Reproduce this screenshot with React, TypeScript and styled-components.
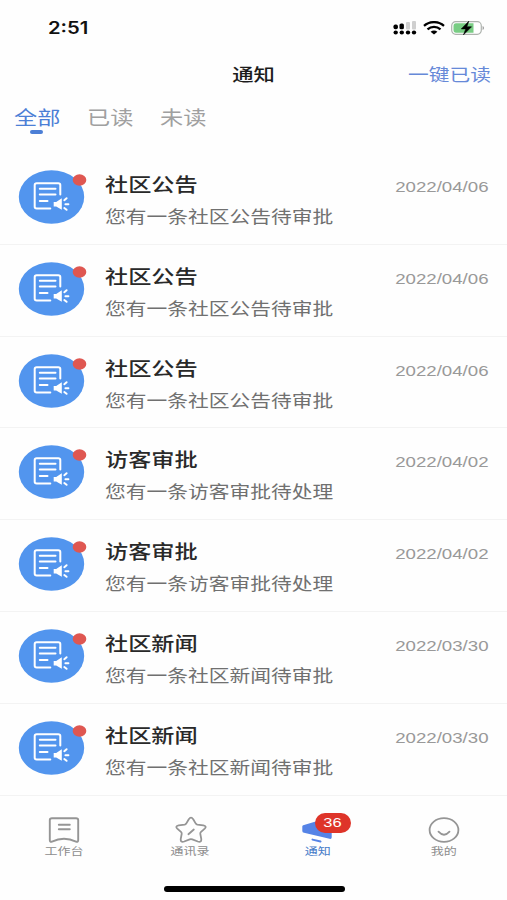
import React from 'react';
import styled, { createGlobalStyle } from 'styled-components';

const Global = createGlobalStyle`
  * { box-sizing: border-box; }
  body { margin: 0; background: #fefefe; overflow: hidden; }
`;

const Screen = styled.div`
  width: 507px;
  height: 900px;
  display: flex;
  flex-direction: column;
  background: #fefefe;
  font-family: Inter, "Noto Sans CJK SC", sans-serif;
`;

const Label = styled.span<{ $size: number; $color: string; $weight?: number; $stretch?: number; $origin?: string }>`
  display: block;
  flex: none;
  white-space: nowrap;
  font-size: ${p => p.$size}px;
  line-height: 24px;
  color: ${p => p.$color};
  font-weight: ${p => p.$weight ?? 400};
  transform: scaleX(${p => p.$stretch ?? 1.22});
  transform-origin: ${p => p.$origin ?? 'left'} center;
`;

const DateLabel = styled(Label)`
  font-family: "Liberation Sans", sans-serif;
`;

const StatusBar = styled.header`
  height: 55px;
  padding: 0 22px 0 48px;
  display: flex;
  align-items: center;
  justify-content: space-between;
`;

const StatusIcons = styled.div`
  display: flex;
  align-items: center;
  gap: 6px;
  svg { display: block; }
`;

const TitleBar = styled.div`
  height: 40px;
  padding: 0 16px;
  display: grid;
  grid-template-columns: 1fr auto 1fr;
  align-items: center;
`;

const ActionSlot = styled.div`
  display: flex;
  justify-content: flex-end;
`;

const Tabs = styled.nav`
  height: 58px;
  padding: 12px 0 0 14px;
  display: flex;
`;

const Tab = styled.div`
  width: 73px;
  flex: none;
`;

const Marker = styled.div`
  width: 13px;
  height: 4px;
  margin: -1px 0 0 16px;
  border-radius: 2px;
  background: #4c7fd6;
`;

const List = styled.main`
  height: 642.6px;
  display: grid;
  grid-template-rows: repeat(7, 91.8px);
`;

const Row = styled.article`
  display: flex;
  padding: 0 18px 0 18px;
  border-bottom: 1px solid #f3f3f3;
`;

const Avatar = styled.div`
  width: 87px;
  padding-top: 16px;
  flex: none;
  svg { display: block; }
`;

const Message = styled.div`
  flex: 1;
  padding-top: 21px;
  display: flex;
  flex-direction: column;
  gap: 7px;
`;

const DateSlot = styled.div`
  padding-top: 22px;
`;

const BottomBar = styled.footer`
  height: 84px;
  padding-top: 19px;
  display: grid;
  grid-template-columns: repeat(4, 126.7px);
`;

const NavItem = styled.div`
  position: relative;
  left: 0.5px;
  display: flex;
  flex-direction: column;
  align-items: center;
  svg { display: block; flex: none; }
  > span { line-height: 14px; }
`;

const Badge = styled.div`
  position: absolute;
  left: 61px;
  top: -2px;
  width: 36px;
  height: 20px;
  border-radius: 10px;
  background: #de3429;
  display: flex;
  align-items: center;
  justify-content: center;
`;

const HomeIndicator = styled.div`
  width: 181px;
  height: 6px;
  margin: 6px 0 0 163.5px;
  border-radius: 3px;
  background: #000;
`;

const SignalIcon = () => (
  <svg width="24" height="14" viewBox="0 0 24 14">
    <g fill="#cfcfcf">
      <rect x="13" y="1" width="4" height="7.5" rx="1" />
      <rect x="19" y="0" width="4" height="8.5" rx="1" />
    </g>
    <g fill="#000">
      <rect x="0.5" y="3.5" width="4.4" height="4.8" rx="1.8" />
      <rect x="6.5" y="2.5" width="4.4" height="5.8" rx="1.6" />
      <ellipse cx="2.7" cy="11.5" rx="2.2" ry="2" />
      <ellipse cx="8.8" cy="11.5" rx="2.2" ry="2" />
      <ellipse cx="15" cy="11.5" rx="2.2" ry="2" />
      <ellipse cx="21" cy="11.5" rx="2.2" ry="2" />
    </g>
  </svg>
);

const WifiIcon = () => (
  <svg width="22" height="14" viewBox="0 0 22 14" fill="none" stroke="#000" strokeWidth="2.3">
    <path d="M1 4.8C6.7-.1 15.3-.1 21 4.8" />
    <path d="M4.5 8.3C8.2 5.1 13.8 5.1 17.5 8.3" />
    <path d="M7.6 10.8C9.6 9.2 12.4 9.2 14.4 10.8L11 13.6Z" fill="#000" stroke="none" />
  </svg>
);

const BatteryIcon = () => (
  <svg width="34" height="16" viewBox="0 0 34 16">
    <rect x=".7" y="1.7" width="29.6" height="12.6" rx="4" fill="#fff" stroke="#aeb3ae" strokeWidth="1.2" />
    <path d="M5 3.3H22.5V12.7H5Q2.5 12.7 2.5 10V6Q2.5 3.3 5 3.3Z" fill="#79cd84" />
    <path d="M31.6 6Q33 6.5 33 8T31.6 10Z" fill="#999" />
    <path d="M17.8 1.2L10.3 8.9H14.8L12.5 14.8L20.5 6.8H15.8Z" fill="#000" stroke="#000" strokeWidth=".6" strokeLinejoin="round" />
  </svg>
);

const NoticeIcon = () => (
  <svg width="70" height="56" viewBox="0 0 70 56">
    <ellipse cx="33.5" cy="28" rx="32.7" ry="26.7" fill="#5295ee" />
    <g fill="none" stroke="#fff" strokeWidth="2" strokeLinecap="round" strokeLinejoin="round">
      <path d="M42.3 25.5V16Q42.3 14.3 40.2 14.3H18.7Q16.7 14.3 16.7 16V37.7Q16.7 39.4 18.7 39.4H32.3" />
      <path d="M21.8 19.8H37.5M21.8 25.5H37.5M21.8 32H29.5" />
      <path d="M46.3 31.2L48.6 29.2M47.4 35.2H50.4M46.3 39L48.6 40.8" />
    </g>
    <path d="M35.7 33H38.2L43.8 29.3V40.7L38.2 37.4H35.7Z" fill="#fff" />
    <ellipse cx="61.5" cy="11" rx="6.8" ry="5.8" fill="#df5751" />
  </svg>
);

const WorkIcon = () => (
  <svg width="34" height="30" viewBox="0 0 34 30" fill="none" stroke="#959595" strokeWidth="1.9" strokeLinejoin="round" strokeLinecap="round">
    <path d="M5 3.2H29Q31.2 3.2 31.2 5V25.3Q31.2 27.3 29 26.6Q23 23.8 17 23.8T5 26.6Q2.8 27.3 2.8 25.3V5Q2.8 3.2 5 3.2Z" />
    <path d="M11.8 9.7H22.8M11.8 14.3H22.8" />
  </svg>
);

const StarIcon = () => (
  <svg width="34" height="30" viewBox="0 0 34 30" fill="none" stroke="#959595" strokeWidth="1.8" strokeLinejoin="round" strokeLinecap="round">
    <path d="M14.8 4.2Q17 1.2 19.2 4.2L21.8 8.6Q22.3 9.4 23.4 9.6L29.3 10.4Q33.2 11.2 30.7 13.7L26.8 17.2Q26.1 17.9 26.3 18.8L27.3 24.2Q27.5 27.8 23.8 26.5L18.3 24.3Q17 23.8 15.7 24.3L10.2 26.5Q6.5 27.8 6.7 24.2L7.7 18.8Q7.9 17.9 7.2 17.2L3.3 13.7Q.8 11.2 4.7 10.4L10.6 9.6Q11.7 9.4 12.2 8.6Z" />
    <path d="M14.4 19.2L19.8 14.5" />
  </svg>
);

const MegaphoneIcon = () => (
  <svg width="34" height="30" viewBox="0 0 34 30">
    <path d="M3.2 10.2L16.5 6.3L31.7 2V22.5Q31.6 24.4 29.5 23.8L4 17.8Q2.3 17.4 2.3 16V11.5Q2.3 10.5 3.2 10.2Z" fill="#5583e6" />
    <path d="M12.5 24.6L20.5 26.5" stroke="#5583e6" strokeWidth="2" strokeLinecap="round" />
  </svg>
);

const FaceIcon = () => (
  <svg width="34" height="30" viewBox="0 0 34 30" fill="none" stroke="#959595" strokeWidth="1.8" strokeLinecap="round">
    <ellipse cx="17" cy="15" rx="14.4" ry="11.9" />
    <path d="M11.5 16.7Q17 22.8 22.5 16.7" />
  </svg>
);

const notices = [
  { title: '社区公告', text: '您有一条社区公告待审批', date: '2022/04/06' },
  { title: '社区公告', text: '您有一条社区公告待审批', date: '2022/04/06' },
  { title: '社区公告', text: '您有一条社区公告待审批', date: '2022/04/06' },
  { title: '访客审批', text: '您有一条访客审批待处理', date: '2022/04/02' },
  { title: '访客审批', text: '您有一条访客审批待处理', date: '2022/04/02' },
  { title: '社区新闻', text: '您有一条社区新闻待审批', date: '2022/03/30' },
  { title: '社区新闻', text: '您有一条社区新闻待审批', date: '2022/03/30' },
];

const navItems = [
  { label: '工作台', Icon: WorkIcon },
  { label: '通讯录', Icon: StarIcon },
  { label: '通知', Icon: MegaphoneIcon, badge: 36 },
  { label: '我的', Icon: FaceIcon },
];

export default function App() {
  return (
    <>
      <Global />
      <Screen>
        <StatusBar>
          <Label $size={17} $color="#111" $weight={600} $stretch={1.19}>2:51</Label>
          <StatusIcons><SignalIcon /><WifiIcon /><BatteryIcon /></StatusIcons>
        </StatusBar>
        <TitleBar>
          <span />
          <Label $size={17.5} $color="#1c1c1c" $weight={500} $origin="center">通知</Label>
          <ActionSlot>
            <Label $size={17} $color="#6689d8" $origin="right">一键已读</Label>
          </ActionSlot>
        </TitleBar>
        <Tabs>
          <Tab><Label $size={19} $color="#4c7fd6">全部</Label><Marker /></Tab>
          <Tab><Label $size={19} $color="#a0a0a0">已读</Label></Tab>
          <Tab><Label $size={19} $color="#a0a0a0">未读</Label></Tab>
        </Tabs>
        <List>
          {notices.map((n, i) => (
            <Row key={i}>
              <Avatar><NoticeIcon /></Avatar>
              <Message>
                <Label $size={19} $color="#292929" $weight={500}>{n.title}</Label>
                <Label $size={17} $color="#707070">{n.text}</Label>
              </Message>
              <DateSlot>
                <DateLabel $size={15.3} $color="#999" $origin="right">{n.date}</DateLabel>
              </DateSlot>
            </Row>
          ))}
        </List>
        <BottomBar>
          {navItems.map(({ label, Icon, badge }) => (
            <NavItem key={label}>
              <Icon />
              <Label $size={10.7} $color={badge ? '#477bc8' : '#8d8d8d'} $origin="center">{label}</Label>
              {badge && (
                <Badge><DateLabel $size={13.5} $color="#fff" $origin="center">{badge}</DateLabel></Badge>
              )}
            </NavItem>
          ))}
        </BottomBar>
        <HomeIndicator />
      </Screen>
    </>
  );
}
